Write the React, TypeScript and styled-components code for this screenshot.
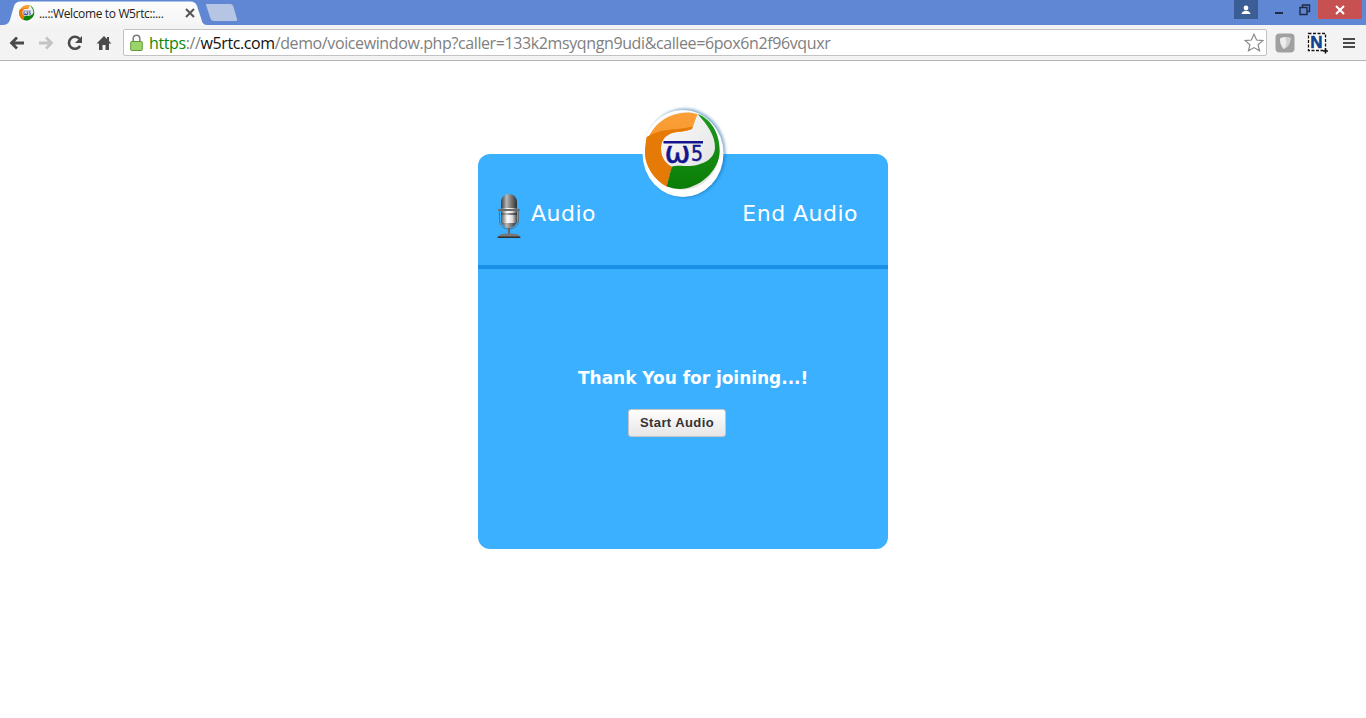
import React from "react";
import styled, { createGlobalStyle } from "styled-components";

const Global = createGlobalStyle`
  html, body { margin: 0; padding: 0; background: #fff; }
  body { font-family: "Open Sans", "Liberation Sans", sans-serif; }
`;

const Page = styled.div`
  width: 1366px;
  height: 718px;
  overflow: hidden;
  display: flex;
  flex-direction: column;
  background: #fff;
`;

const TitleBar = styled.div`
  height: 25px;
  flex: none;
  display: flex;
  align-items: flex-start;
  padding-left: 3px;
  background: #5f87d4;
  box-sizing: border-box;
`;

const Tab = styled.div`
  width: 204px;
  height: 25px;
  flex: none;
  box-sizing: border-box;
  display: flex;
  align-items: center;
  padding: 1px 12px 0 16px;
  background: linear-gradient(#fdfdfd, #f5f5f5);
  clip-path: path("M0 25 C5 25 6.5 22 7.5 18 L11 6 C12 3 14 1.5 18 1.5 L187 1.5 C191 1.5 193 3 194 6 L198 18 C199 22 200 25 204 25 Z");
`;

const TabTitle = styled.span`
  flex: 1;
  margin-left: 4px;
  font: 12px "Open Sans", sans-serif;
  letter-spacing: -0.36px;
  color: #222;
  white-space: nowrap;
  overflow: hidden;
`;

const NewTab = styled.div`
  width: 32px;
  height: 17px;
  margin: 4px 0 0 -1px;
  flex: none;
  background: #b5c5e3;
  clip-path: path("M0 0 L24 0 C26 0 27 1 27.5 3 L31 15 C31.3 16.5 31 17 30 17 L8 17 C6 17 5 16 4.5 14.5 L0 1 Z");
`;

const WindowControls = styled.div`
  margin-left: auto;
  margin-right: 4px;
  display: flex;
  align-items: flex-start;
`;

const UserButton = styled.div`
  width: 24px;
  height: 19px;
  margin-right: 8px;
  background: #3b5e96;
  display: flex;
  align-items: center;
  justify-content: center;
`;

const CaptionButton = styled.div<{ $w: number }>`
  width: ${(p) => p.$w}px;
  height: 19px;
  display: flex;
  align-items: center;
  justify-content: center;
`;

const CloseButton = styled(CaptionButton)`
  background: #c75050;
`;

const Toolbar = styled.div`
  height: 36px;
  flex: none;
  box-sizing: border-box;
  display: flex;
  align-items: center;
  padding: 0 6px 0 2px;
  background: #f3f3f3;
  border-bottom: 1px solid #b4b4b4;
`;

const NavIcon = styled.div<{ $w?: number }>`
  width: ${(p) => p.$w ?? 29}px;
  height: 24px;
  flex: none;
  display: flex;
  align-items: center;
  justify-content: center;
`;

const Omnibox = styled.div`
  flex: none;
  width: 1144px;
  height: 27px;
  margin: 0 8px 0 5px;
  box-sizing: border-box;
  display: flex;
  align-items: center;
  padding: 0 2px 0 6px;
  background: #fff;
  border: 1px solid #c3c3c3;
  border-radius: 2px;
`;

const Url = styled.div`
  flex: 1;
  margin-left: 6px;
  font: 16px "Open Sans", sans-serif;
  letter-spacing: -0.39px;
  color: #808080;
  white-space: nowrap;
`;

const Scheme = styled.span`
  color: #0b8a0b;
`;

const Domain = styled.span`
  color: #111;
`;

const Stage = styled.main`
  flex: 1;
  display: flex;
  justify-content: center;
  align-items: flex-start;
  padding-top: 93px;
`;

const Card = styled.section`
  position: relative;
  width: 410px;
  height: 395px;
  background: #3bb0ff;
  border-radius: 12px;
  display: flex;
  flex-direction: column;
`;

const LogoWrap = styled.div`
  position: absolute;
  left: 162px;
  top: -50px;
  width: 88px;
  height: 96px;
`;

const FaviconWrap = styled.div`
  width: 18px;
  height: 20px;
  margin: 0 -1px;
  flex: none;
`;

const CardHeader = styled.header`
  height: 115px;
  flex: none;
  box-sizing: border-box;
  display: flex;
  align-items: flex-start;
  padding: 39px 30px 0 18px;
  border-bottom: 4px solid #0f80d8;
  border-image: linear-gradient(#0f80d8, #0f80d8 60%, #1a90e6) 1;
  color: #fff;
  font: 22px "DejaVu Sans", sans-serif;
  letter-spacing: 0.48px;
`;

const AudioLabel = styled.span`
  margin: 8px 0 0 9px;
  line-height: 26px;
`;

const EndLabel = styled.span`
  margin: 8px 0 0 auto;
  line-height: 26px;
`;

const CardBody = styled.div`
  flex: 1;
  display: flex;
  flex-direction: column;
  padding: 99px 0 0 100px;
`;

const Thanks = styled.h2`
  margin: 0;
  font: bold 17px/20px "DejaVu Sans", sans-serif;
  letter-spacing: -0.03px;
  color: #fff;
  white-space: nowrap;
`;

const StartButton = styled.button`
  width: 98px;
  height: 28px;
  margin: 21px 0 0 50px;
  padding: 0 0 2px;
  border: 1px solid #c4c4c4;
  border-radius: 3px;
  background: linear-gradient(#fefefe, #e6e6e6);
  color: #333;
  font: bold 13px "Liberation Sans", sans-serif;
  letter-spacing: 0.42px;
`;

const LogoMark = ({ uid, shadow }: { uid: string; shadow?: boolean }) => (
  <svg width="100%" height="100%" viewBox="0 0 88 96">
    <defs>
      <linearGradient id={`${uid}or`} x1="0" y1="0" x2="0" y2="1">
        <stop offset="0" stopColor="#fb9f38" />
        <stop offset="1" stopColor="#f58f22" />
      </linearGradient>
      <linearGradient id={`${uid}gr`} x1="0" y1="0" x2="0" y2="1">
        <stop offset="0" stopColor="#1c9a1c" />
        <stop offset="1" stopColor="#0b7d07" />
      </linearGradient>
      <linearGradient id={`${uid}bg`} x1="0" y1="0" x2="1" y2="1">
        <stop offset="0" stopColor="#ffffff" />
        <stop offset="1" stopColor="#dedede" />
      </linearGradient>
      <filter id={`${uid}sh`} x="-20%" y="-20%" width="140%" height="140%">
        <feGaussianBlur stdDeviation="1.5" />
      </filter>
    </defs>
    {shadow && <ellipse cx="45" cy="49" rx="40.5" ry="44.5" fill="#0d5d9c" opacity=".5" filter={`url(#${uid}sh)`} />}
    <ellipse cx="43" cy="49.5" rx="40.5" ry="43.5" fill="#fff" />
    <ellipse cx="42.5" cy="47" rx="37" ry="39" fill={`url(#${uid}bg)`} />
    <path d="M57.5 10 C50 7.5 41 8 33 11 C15 17 5 34 5 50 C5.5 62 14 76 26.7 82.5 L31.7 62.7 C26 60 21 54 21 45 C21 37 24 32 32 29 C38 27.5 46 27.5 52 25 Z" fill={`url(#${uid}or)`} />
    <path d="M6.6 33 C12 30 18 27.5 24 26.5 C33 25 43 25 52.6 22.5 L52 25 C46 27.5 38 27.5 32 29 C24 32 21 37 21 45 C21 54 26 60 31.7 62.7 L26.7 82.5 C14 76 5.5 62 5 50 C5 44 5.5 38 6.6 33Z" fill="#e67a06" />
    <path d="M57.5 10 C72 15 80 31 79.7 47.7 C79 68 58 84.5 40 85 C35 85 30 83.5 26.7 82.5 L31.7 62.7 C36 61 42 62 50 62 C63 61 75 55 75 43 C75 32 68 21 57.5 10Z" fill={`url(#${uid}gr)`} />
    <path d="M23.5 38.3 H63" stroke="#14148c" strokeWidth="2.4" />
    <text x="24.5" y="58.5" fontFamily="DejaVu Sans, sans-serif" fontSize="30" fill="#14148c" stroke="#14148c" strokeWidth=".5" textLength="26" lengthAdjust="spacingAndGlyphs">ω</text>
    <text x="51" y="56.5" fontFamily="DejaVu Sans, sans-serif" fontSize="22" fill="#14148c" stroke="#14148c" strokeWidth=".5" textLength="12" lengthAdjust="spacingAndGlyphs">5</text>
  </svg>
);

const Mic = () => (
  <svg width="26" height="46" viewBox="0 0 26 46">
    <defs>
      <linearGradient id="mg" x1="0" y1="0" x2="1" y2="0">
        <stop offset="0" stopColor="#3c3c3c" />
        <stop offset=".35" stopColor="#b8b8b8" />
        <stop offset=".55" stopColor="#8a8a8a" />
        <stop offset="1" stopColor="#2e2e2e" />
      </linearGradient>
      <linearGradient id="mb" x1="0" y1="0" x2="1" y2="0">
        <stop offset="0" stopColor="#555" />
        <stop offset=".4" stopColor="#fff" />
        <stop offset=".7" stopColor="#ddd" />
        <stop offset="1" stopColor="#444" />
      </linearGradient>
    </defs>
    <rect x="5" y="1" width="16" height="34" rx="8" fill="url(#mg)" />
    <rect x="5" y="15" width="16" height="5" fill="url(#mb)" />
    <rect x="5" y="22" width="16" height="8" fill="url(#mb)" />
    <rect x="2" y="16" width="22" height="2" rx="1" fill="#6b6b6b" />
    <path d="M3.5 17 V27 C3.5 33 8 36 13 36 C18 36 22.5 33 22.5 27 V17" fill="none" stroke="#5a6f80" strokeWidth="1" />
    <rect x="12" y="35" width="2" height="6" fill="#666" />
    <path d="M2 44 C3 41 8 40.5 13 40.5 C18 40.5 23 41 24 44 Z" fill="#777" />
    <rect x="1.5" y="43.5" width="23" height="1.5" rx=".7" fill="#2d2d2d" />
  </svg>
);

const App = () => (
  <>
    <Global />
    <Page>
      <TitleBar>
        <Tab>
          <FaviconWrap>
            <LogoMark uid="fav" />
          </FaviconWrap>
          <TabTitle>...::Welcome to W5rtc::...</TabTitle>
          <svg width="10" height="10" viewBox="0 0 10 10">
            <path d="M1 1 L9 9 M9 1 L1 9" stroke="#555" strokeWidth="2" />
          </svg>
        </Tab>
        <NewTab />
        <WindowControls>
          <UserButton>
            <svg width="10" height="10" viewBox="0 0 10 10">
              <circle cx="5" cy="3" r="2.4" fill="#fff" />
              <path d="M0.5 9 C1 6.5 3 6 5 6 C7 6 9 6.5 9.5 9 Z" fill="#fff" />
            </svg>
          </UserButton>
          <CaptionButton $w={26}>
            <svg width="10" height="10" viewBox="0 0 10 10">
              <rect x="1" y="7" width="8" height="2" fill="#1f2a44" />
            </svg>
          </CaptionButton>
          <CaptionButton $w={26}>
            <svg width="12" height="12" viewBox="0 0 12 12">
              <path d="M3.5 3 V1 H10.5 V7.5 H8.5 M1 3.5 H8 V10.5 H1 Z" fill="none" stroke="#1f2a44" strokeWidth="1.4" />
            </svg>
          </CaptionButton>
          <CloseButton $w={44}>
            <svg width="10" height="10" viewBox="0 0 10 10">
              <path d="M1 1 L9 9 M9 1 L1 9" stroke="#fff" strokeWidth="2" />
            </svg>
          </CloseButton>
        </WindowControls>
      </TitleBar>
      <Toolbar>
        <NavIcon>
          <svg width="16" height="14" viewBox="0 0 16 14">
            <path d="M15 7 H4 M8 1.5 L2.5 7 L8 12.5" fill="none" stroke="#4a4a4a" strokeWidth="2.8" />
          </svg>
        </NavIcon>
        <NavIcon>
          <svg width="16" height="14" viewBox="0 0 16 14">
            <path d="M1 7 H12 M8 1.5 L13.5 7 L8 12.5" fill="none" stroke="#c4c4c4" strokeWidth="2.8" />
          </svg>
        </NavIcon>
        <NavIcon>
          <svg width="16" height="16" viewBox="0 0 16 16">
            <path d="M13 11 A6 6 0 1 1 12.6 4" fill="none" stroke="#4a4a4a" strokeWidth="2.6" />
            <path d="M15 1 V8 H8 Z" fill="#4a4a4a" />
          </svg>
        </NavIcon>
        <NavIcon>
          <svg width="16" height="16" viewBox="0 0 16 16">
            <path d="M8 1 L0.5 8.5 H3 V15 H6.5 V10 H9.5 V15 H13 V8.5 H15.5 L13 6 V2 H11 V4 Z" fill="#4a4a4a" />
          </svg>
        </NavIcon>
        <Omnibox>
          <svg width="13" height="17" viewBox="0 0 13 17">
            <path d="M3.2 8 V4.5 C3.2 2.6 4.6 1.2 6.5 1.2 C8.4 1.2 9.8 2.6 9.8 4.5 V8" fill="none" stroke="#7a7a7a" strokeWidth="1.5" />
            <rect x="0.7" y="7.5" width="11.6" height="9" rx="1" fill="#9bd46b" stroke="#5f9a35" />
          </svg>
          <Url>
            <Scheme>https</Scheme>://<Domain>w5rtc.com</Domain>/demo/voicewindow.php?caller=133k2msyqngn9udi&amp;callee=6pox6n2f96vquxr
          </Url>
          <svg width="20" height="19" viewBox="0 0 20 19">
            <path d="M10 1.2 L12.6 7 L18.8 7.6 L14.1 11.7 L15.5 17.8 L10 14.6 L4.5 17.8 L5.9 11.7 L1.2 7.6 L7.4 7 Z" fill="#fff" stroke="#8a8a8a" strokeWidth="1.2" />
          </svg>
        </Omnibox>
        <NavIcon $w={20}>
          <svg width="20" height="20" viewBox="0 0 20 20">
            <rect x="0.5" y="0.5" width="19" height="19" rx="4" fill="#a0a0a0" />
            <path d="M5 5.5 C8 3.5 12 3.5 15.5 5 C15.5 10 13 14.5 8.5 16 C6 13 4.5 9 5 5.5Z" fill="#ececec" />
            <path d="M10 4 C12 4 13.5 4.3 15.5 5 C15.5 10 13 14.5 9 15.8 C12 12 12 8 10 4Z" fill="#cfcfcf" />
          </svg>
        </NavIcon>
        <NavIcon $w={45}>
          <svg width="22" height="22" viewBox="0 0 22 22">
            <rect x="1.5" y="1.5" width="17" height="17" fill="#fff" stroke="#111" strokeWidth="1.3" strokeDasharray="3 1.5" />
            <text x="3.2" y="16" fontFamily="Liberation Sans, sans-serif" fontWeight="bold" fontSize="17" fill="#12408c" stroke="#12408c" strokeWidth=".5">N</text>
            <path d="M16 19 H21 M18.5 16.5 V21.5" stroke="#111" strokeWidth="1.6" />
          </svg>
        </NavIcon>
        <NavIcon $w={18}>
          <svg width="14" height="12" viewBox="0 0 14 12">
            <path d="M1 2 H13 M1 6 H13 M1 10 H13" stroke="#4a4a4a" strokeWidth="2.2" />
          </svg>
        </NavIcon>
      </Toolbar>
      <Stage>
        <Card>
          <LogoWrap>
            <LogoMark uid="main" shadow />
          </LogoWrap>
          <CardHeader>
            <Mic />
            <AudioLabel>Audio</AudioLabel>
            <EndLabel>End Audio</EndLabel>
          </CardHeader>
          <CardBody>
            <Thanks>Thank You for joining...!</Thanks>
            <StartButton>Start Audio</StartButton>
          </CardBody>
        </Card>
      </Stage>
    </Page>
  </>
);

export default App;
